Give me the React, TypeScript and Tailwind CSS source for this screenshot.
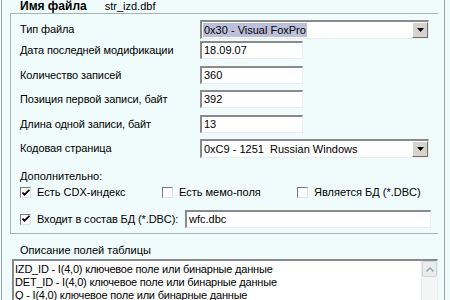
const font = "font-['Liberation_Sans',Arial,sans-serif]";

function Sunken({ className = '', children }: { className?: string; children?: React.ReactNode }) {
  return (
    <div className={`shrink-0 border-t-2 border-l-2 border-t-[#8a8a8a] border-l-[#8a8a8a] border-b border-r border-b-[#e8eeee] border-r-[#e8eeee] bg-white ${className}`}>
      {children}
    </div>
  );
}

function TextBox({ value, width }: { value: string; width: string }) {
  return (
    <Sunken className={`${width} h-[18px] flex items-center px-[2px]`}>
      <span className="text-[11px] leading-none text-black">{value}</span>
    </Sunken>
  );
}

function ArrowButton() {
  return (
    <div className="w-[16px] h-full bg-[#d6d3ce] border-t border-l border-white border-b border-r border-b-[#707070] border-r-[#707070] flex items-center justify-center">
      <svg width="7" height="4" viewBox="0 0 7 4">
        <path d="M0 0h7L3.5 4z" fill="#000" />
      </svg>
    </div>
  );
}

function Combo({ value, selected }: { value: string; selected?: boolean }) {
  return (
    <Sunken className="w-[229px] h-[19px] flex items-stretch">
      <div className="flex-1 flex items-center pl-[1px]">
        <span className={`text-[11px] leading-[14px] text-black px-px whitespace-pre ${selected ? 'bg-[#bcc0da]' : ''}`}>{value}</span>
      </div>
      <ArrowButton />
    </Sunken>
  );
}

function Check({ checked }: { checked?: boolean }) {
  return (
    <div className="shrink-0 w-[11px] h-[11px] bg-white border-t border-l border-[#7a7a7a] border-b border-r border-b-[#dde4e4] border-r-[#dde4e4] flex items-center justify-center">
      {checked && (
        <svg width="8" height="8" viewBox="0 0 8 8">
          <path d="M0.5 3.5l2 2.2L7.5 0.8" stroke="#000" strokeWidth="1.8" fill="none" />
        </svg>
      )}
    </div>
  );
}

function Row({ label, top, h, children }: { label: string; top: string; h: string; children: React.ReactNode }) {
  return (
    <div className={`shrink-0 flex items-center ${top} ${h}`}>
      <span className="w-[189px] pl-[9px] text-[11px] leading-none text-black tracking-[-0.1px]">{label}</span>
      {children}
    </div>
  );
}

export default function App() {
  const fields = [
    'IZD_ID - I(4,0) ключевое поле или бинарные данные',
    'DET_ID - I(4,0) ключевое поле или бинарные данные',
    'Q - I(4,0) ключевое поле или бинарные данные',
  ];
  return (
    <div className={`w-[450px] h-[300px] overflow-hidden bg-[#f0fcfc] pl-px ${font}`}>
      <div className="w-[444px] h-full border-l border-r border-[#9aa4a4] flex flex-col">
        <div className="shrink-0 h-[13px] flex items-start pl-[18px]">
          <span className="text-[12px] font-bold leading-none text-black">Имя файла</span>
          <span className="text-[11px] leading-none text-black ml-[18px] mt-px">str_izd.dbf</span>
        </div>
        <div className="shrink-0 ml-[8px] w-[428px] h-[221px] border-t border-l border-b border-[#a9b2b2] flex flex-col">
          <Row label="Тип файла" top="mt-[6px]" h="h-[19px]">
            <Combo value="0x30 - Visual FoxPro" selected />
          </Row>
          <Row label="Дата последней модификации" top="mt-[2px]" h="h-[18px]">
            <TextBox value="18.09.07" width="w-[103px]" />
          </Row>
          <Row label="Количество записей" top="mt-[7px]" h="h-[18px]">
            <TextBox value="360" width="w-[103px]" />
          </Row>
          <Row label="Позиция первой записи, байт" top="mt-[6px]" h="h-[18px]">
            <TextBox value="392" width="w-[103px]" />
          </Row>
          <Row label="Длина одной записи, байт" top="mt-[7px]" h="h-[18px]">
            <TextBox value="13" width="w-[103px]" />
          </Row>
          <Row label="Кодовая страница" top="mt-[6px]" h="h-[19px]">
            <Combo value="0xC9 - 1251  Russian Windows" />
          </Row>
          <div className="shrink-0 mt-[12px] h-[12px] flex items-center pl-[9px] text-[11px] leading-none text-black">Дополнительно:</div>
          <div className="shrink-0 mt-[4px] flex items-center pl-[9px] h-[13px]">
            <div className="w-[142px] flex items-center gap-[6px]">
              <Check checked />
              <span className="text-[11px] leading-none text-black whitespace-nowrap">Есть CDX-индекс</span>
            </div>
            <div className="w-[135px] flex items-center gap-[6px]">
              <Check />
              <span className="text-[11px] leading-none text-black whitespace-nowrap">Есть мемо-поля</span>
            </div>
            <div className="flex items-center gap-[6px]">
              <Check />
              <span className="text-[11px] leading-none text-black whitespace-nowrap">Является БД (*.DBC)</span>
            </div>
          </div>
          <div className="shrink-0 mt-[11px] h-[18px] flex items-center pl-[9px]">
            <div className="w-[165px] flex items-center gap-[6px]">
              <Check checked />
              <span className="text-[11px] leading-none text-black whitespace-nowrap tracking-[-0.1px]">Входит в состав БД (*.DBC):</span>
            </div>
            <TextBox value="wfc.dbc" width="w-[246px]" />
          </div>
        </div>
        <div className="shrink-0 mt-[10px] h-[12px] flex items-center pl-[18px] text-[11px] leading-none text-black">Описание полей таблицы</div>
        <Sunken className="mt-[3px] ml-[10px] w-[426px] h-[60px] flex">
          <div className="flex-1 pl-px pt-[2px] flex flex-col">
            {fields.map((f) => (
              <span key={f} className="text-[11px] leading-[13px] tracking-[-0.2px] text-black whitespace-nowrap">{f}</span>
            ))}
          </div>
          <div className="w-[16px] bg-[#f4f6f6] border-l border-[#e4e8e8] flex flex-col">
            <div className="h-[16px] bg-[#e8ecec] border border-[#d0d6d6] rounded-[2px] flex items-center justify-center">
              <svg width="8" height="5" viewBox="0 0 8 5">
                <path d="M0.5 4.5L4 1l3.5 3.5" stroke="#9aa0a0" strokeWidth="1.4" fill="none" />
              </svg>
            </div>
          </div>
        </Sunken>
      </div>
    </div>
  );
}
